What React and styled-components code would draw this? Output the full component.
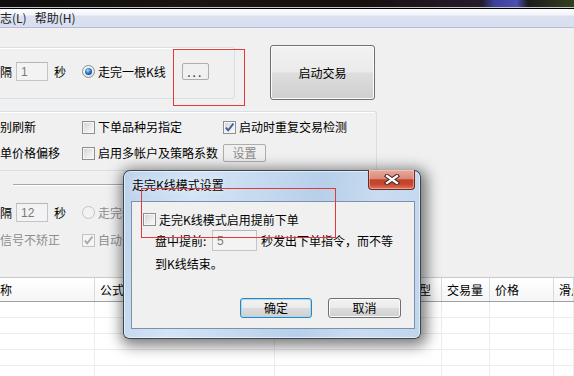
import styled, { createGlobalStyle } from "styled-components"

const GlobalStyle = createGlobalStyle`
	html, body {
		margin: 0;
		padding: 0;
	}
	body {
		background: #f0f0f0;
		font-family: "Noto Sans CJK SC", "Liberation Sans", sans-serif;
		font-size: 12px;
		color: #000;
	}
`

const Screen = styled.div`
	position: relative;
	width: 574px;
	height: 376px;
	overflow: hidden;
	background: #f0f0f0;
`
const Desktop = styled.div`
	height: 7px;
	border-bottom: 1px solid #c4c4c4;
	background: linear-gradient(
		to right,
		#0e0e0e 0,
		#1b1411 35%,
		#160f0d 62%,
		#241c2c 84%,
		#3c3f98 86%,
		#4b50b2 90%,
		#1c1c1c 92%,
		#33401f 100%
	);
`
const MenuBar = styled.div`
	display: flex;
	align-items: center;
	height: 18px;
	margin-left: -4px;
	border-top: 1px solid #000;
	border-bottom: 1px solid #b6bcd2;
	background: linear-gradient(#fcfdfe 0, #f1f4fa 6px, #dbe1f1 7px, #d9dff0 100%);
`
const MenuItem = styled.span`
	padding: 0 4px;
	line-height: 16px;
	color: #222;
`

const Body = styled.div`
	padding-top: 17px;
`
const TopRow = styled.div`
	display: flex;
	align-items: flex-start;
`
const GroupBox = styled.div`
	box-sizing: border-box;
	margin-left: -10px;
	margin-top: ${(p) => p.$top || 0}px;
	width: ${(p) => p.$w}px;
	height: ${(p) => p.$h}px;
	border: 1px solid #d5dfe5;
	border-radius: 3px;
	box-shadow: inset 1px 1px 0 #fff;
`
const OptionRow = styled.div`
	display: flex;
	align-items: center;
	height: ${(p) => p.$h || 18}px;
	margin-top: ${(p) => p.$top || 0}px;
	padding-left: ${(p) => p.$pad || 0}px;
	padding-bottom: ${(p) => p.$padBottom || 0}px;
	box-sizing: border-box;
`
const InlineRow = styled(OptionRow)`
	height: 100%;
`
const Text = styled.span`
	flex: none;
	line-height: 16px;
	white-space: nowrap;
	color: ${(p) => (p.$disabled ? "#8d8d8d" : "#000")};
	margin-left: ${(p) => p.$ml || 0}px;
	width: ${(p) => (p.$w ? `${p.$w}px` : "auto")};
`
const TextBox = styled.span`
	box-sizing: border-box;
	flex: none;
	display: flex;
	align-items: center;
	width: ${(p) => p.$w}px;
	height: ${(p) => p.$h || 19}px;
	margin-left: ${(p) => p.$ml || 0}px;
	padding-left: 4px;
	border: 1px solid #c2c4c8;
	border-top-color: #b4b6ba;
	background: #f3f3f3;
	color: #7a7a7a;
	font-family: "Liberation Sans", sans-serif;
	font-size: 12px;
`
const Radio = styled.span`
	box-sizing: border-box;
	flex: none;
	position: relative;
	width: 13px;
	height: 13px;
	margin-left: ${(p) => p.$ml || 0}px;
	border-radius: 50%;
	border: 1px solid ${(p) => (p.$disabled ? "#c3c3c3" : "#8e8f8f")};
	background: ${(p) =>
		p.$disabled ? "#f2f2f2" : "radial-gradient(circle at 35% 35%, #ffffff, #d9dbde)"};

	&::after {
		content: "";
		display: ${(p) => (p.$checked ? "block" : "none")};
		position: absolute;
		left: 2px;
		top: 2px;
		width: 7px;
		height: 7px;
		border-radius: 50%;
		background: radial-gradient(circle at 40% 35%, #b7e3ff 0, #3d8fd8 35%, #10478c 75%, #0c2f63 100%);
	}
`
const CheckBox = styled.span`
	box-sizing: border-box;
	flex: none;
	display: flex;
	align-items: center;
	justify-content: center;
	width: 13px;
	height: 13px;
	margin-left: ${(p) => p.$ml || 0}px;
	border: 1px solid ${(p) => (p.$disabled ? "#c3c3c3" : "#8e8f8f")};
	background: ${(p) =>
		p.$disabled ? "#f4f4f4" : "linear-gradient(135deg, #cfd2d6 0%, #eceded 60%, #fafafa 100%)"};
	box-shadow: inset 0 0 0 1px ${(p) => (p.$disabled ? "#f4f4f4" : "#f6f6f6")};
`
const FlatButton = styled.span`
	box-sizing: border-box;
	flex: none;
	display: flex;
	align-items: center;
	justify-content: center;
	width: ${(p) => p.$w}px;
	height: ${(p) => p.$h}px;
	margin-left: ${(p) => p.$ml || 0}px;
	border: 1px solid #adadad;
	border-radius: 2px;
	background: #f0f0f0;
	color: ${(p) => (p.$disabled ? "#8a8a8a" : "#333")};
	line-height: 14px;
	letter-spacing: ${(p) => p.$spacing || 0}px;
`
const AeroButton = styled.span`
	box-sizing: border-box;
	flex: none;
	display: flex;
	align-items: center;
	justify-content: center;
	width: ${(p) => p.$w}px;
	height: ${(p) => p.$h}px;
	margin-left: ${(p) => p.$ml || 0}px;
	border: 1px solid ${(p) => (p.$focused ? "#3c7fb1" : "#707070")};
	border-radius: 3px;
	background: linear-gradient(#f2f2f2 0%, #ebebeb 48%, #dddddd 52%, #cfcfcf 100%);
	box-shadow: inset 0 0 0 1px ${(p) => (p.$focused ? "#9fdcf7" : "#fbfbfb")};
	line-height: 16px;
`

const OptionsGrid = styled.div`
	display: grid;
	grid-template-columns: 82px 141px auto;
	grid-auto-rows: 18px;
	row-gap: 8px;
	align-items: center;
	padding: 6px 0 0 9px;
`
const Cell = styled.div`
	display: flex;
	align-items: center;
`
const Separator = styled.div`
	width: 330px;
	margin: 13px 0 0 13px;
	border-top: 1px solid #a7a7a7;
	border-bottom: 1px solid #ffffff;
`

const cols = "136px 180px 167px 48px 64px 1fr"

const Table = styled.div`
	margin-top: 28px;
	margin-left: -41px;
	border-top: 1px solid #c9c9c9;
	background: #fff;
`
const HeaderRow = styled.div`
	display: grid;
	grid-template-columns: ${cols};
	height: 23px;
	border-bottom: 1px solid #a0a0a0;
	background: linear-gradient(#ffffff, #f4f5f6);
`
const HeaderCell = styled.div`
	display: flex;
	align-items: center;
	justify-content: ${(p) => (p.$right ? "flex-end" : "flex-start")};
	padding: 0 10px 0 5px;
	border-right: 1px solid #dadada;
	white-space: nowrap;
	overflow: hidden;
	line-height: 16px;
`
const DataRow = styled.div`
	display: grid;
	grid-template-columns: ${cols};
	height: 15px;
	border-bottom: 1px solid #ececec;
`
const DataCell = styled.div`
	border-right: 1px solid #ececec;
`

const Dialog = styled.div`
	position: absolute;
	left: 123px;
	top: 170px;
	box-sizing: border-box;
	width: 298px;
	height: 169px;
	display: flex;
	flex-direction: column;
	padding: 0 5px 9px 7px;
	border: 1px solid rgba(20, 28, 40, 0.78);
	border-radius: 7px 7px 6px 6px;
	background: linear-gradient(
		100deg,
		#bcd3ec 0%,
		#d3e4f6 22%,
		#c4d9ef 45%,
		#b7cfea 62%,
		#cadcf1 80%,
		#c0d6ee 100%
	);
	box-shadow: inset 0 0 0 1px rgba(255, 255, 255, 0.55), 2px 3px 14px 4px rgba(0, 0, 0, 0.5);
`
const TitleBar = styled.div`
	display: flex;
	align-items: flex-start;
	height: 30px;
`
const Title = styled.span`
	padding: 6px 0 0 1px;
	line-height: 16px;
	color: #000;
	text-shadow: 0 0 6px rgba(255, 255, 255, 0.9);
`
const CloseButton = styled.span`
	box-sizing: border-box;
	display: flex;
	align-items: center;
	justify-content: center;
	width: 47px;
	height: 20px;
	margin: -1px 0 0 auto;
	border: 1px solid #6e2a22;
	border-top: none;
	border-radius: 0 0 4px 4px;
	background: linear-gradient(#e8aa9d 0%, #d98b79 45%, #c3432c 52%, #c8462e 75%, #e07660 100%);
	box-shadow: inset 0 0 0 1px rgba(255, 220, 210, 0.45);
`
const Client = styled.div`
	box-sizing: border-box;
	flex: 1;
	display: flex;
	flex-direction: column;
	border: 1px solid #7d91ad;
	background: #f0f0f0;
`
const ButtonBar = styled.div`
	display: flex;
	justify-content: flex-end;
	gap: 16px;
	margin-top: auto;
	padding: 0 13px 10px 0;
`
const Highlight = styled.div`
	position: absolute;
	left: ${(p) => p.$x}px;
	top: ${(p) => p.$y}px;
	width: ${(p) => p.$w}px;
	height: ${(p) => p.$h}px;
	box-sizing: border-box;
	border: 1px solid #e23a3a;
	pointer-events: none;
`

const Tick = ({ disabled }) => (
	<svg width='11' height='11' viewBox='0 0 11 11'>
		<path
			d='M1.8 5.6 L4.2 8.4 L9.4 1.6'
			fill='none'
			stroke={disabled ? "#a8a8a8" : "#44599a"}
			strokeWidth='1.8'
		/>
	</svg>
)

const CloseGlyph = () => (
	<svg width='16' height='11' viewBox='0 0 16 11'>
		<path d='M3 2 L13 9 M13 2 L3 9' stroke='#4a2a2a' strokeWidth='4.4' strokeLinecap='square' />
		<path d='M3 2 L13 9 M13 2 L3 9' stroke='#ffffff' strokeWidth='2.2' strokeLinecap='square' />
	</svg>
)

const rows = [0, 1, 2, 3, 4, 5]

const App = () => {
	return (
		<Screen>
			<GlobalStyle />
			<Desktop />
			<MenuBar>
				<MenuItem>志(L)</MenuItem>
				<MenuItem>帮助(H)</MenuItem>
			</MenuBar>

			<Body>
				<TopRow>
					<GroupBox $top={2} $w={245} $h={52}>
						<InlineRow $pad={9} $padBottom={3}>
							<Text>隔</Text>
							<TextBox $w={32} $ml={4}>1</TextBox>
							<Text $ml={6}>秒</Text>
							<Radio $ml={16} $checked />
							<Text $ml={3}>走完一根K线</Text>
							<FlatButton $w={27} $h={17} $ml={16} $spacing={2}>
								...
							</FlatButton>
						</InlineRow>
					</GroupBox>
					<AeroButton $w={105} $h={55} $ml={35}>
						启动交易
					</AeroButton>
				</TopRow>

				<GroupBox $top={11} $w={387} $h={60}>
					<OptionsGrid>
						<Text>别刷新</Text>
						<Cell>
							<CheckBox />
							<Text $ml={3}>下单品种另指定</Text>
						</Cell>
						<Cell>
							<CheckBox>
								<Tick />
							</CheckBox>
							<Text $ml={3}>启动时重复交易检测</Text>
						</Cell>
						<Text>单价格偏移</Text>
						<Cell>
							<CheckBox />
							<Text $ml={3}>启用多帐户及策略系数</Text>
						</Cell>
						<Cell>
							<FlatButton $w={43} $h={18} $disabled>
								设置
							</FlatButton>
						</Cell>
					</OptionsGrid>
				</GroupBox>

				<Separator />

				<OptionRow $h={19} $top={17}>
					<Text>隔</Text>
					<TextBox $w={32} $ml={4}>12</TextBox>
					<Text $ml={6}>秒</Text>
					<Radio $ml={16} $disabled />
					<Text $ml={3} $disabled>
						走完一根K线
					</Text>
				</OptionRow>
				<OptionRow $top={9}>
					<Text $w={82} $disabled>
						信号不矫正
					</Text>
					<CheckBox $disabled>
						<Tick disabled />
					</CheckBox>
					<Text $ml={3} $disabled>
						自动开平仓
					</Text>
				</OptionRow>

				<Table>
					<HeaderRow>
						<HeaderCell>合约名称</HeaderCell>
						<HeaderCell>公式</HeaderCell>
						<HeaderCell $right>交易类型</HeaderCell>
						<HeaderCell>交易量</HeaderCell>
						<HeaderCell>价格</HeaderCell>
						<HeaderCell>滑点</HeaderCell>
					</HeaderRow>
					{rows.map((r) => (
						<DataRow key={r}>
							<DataCell />
							<DataCell />
							<DataCell />
							<DataCell />
							<DataCell />
							<DataCell />
						</DataRow>
					))}
				</Table>
			</Body>

			<Highlight $x={173} $y={49} $w={72} $h={57} />

			<Dialog>
				<TitleBar>
					<Title>走完K线模式设置</Title>
					<CloseButton>
						<CloseGlyph />
					</CloseButton>
				</TitleBar>
				<Client>
					<OptionRow $h={13} $top={11} $pad={11}>
						<CheckBox />
						<Text $ml={3}>走完K线模式启用提前下单</Text>
					</OptionRow>
					<OptionRow $h={21} $top={4} $pad={23}>
						<Text $w={57}>盘中提前:</Text>
						<TextBox $w={45} $h={21}>
							5
						</TextBox>
						<Text $ml={4}>秒发出下单指令，而不等</Text>
					</OptionRow>
					<OptionRow $h={16} $top={5} $pad={23}>
						<Text>到K线结束。</Text>
					</OptionRow>
					<ButtonBar>
						<AeroButton $w={72} $h={20} $focused>
							确定
						</AeroButton>
						<AeroButton $w={73} $h={20}>
							取消
						</AeroButton>
					</ButtonBar>
				</Client>
			</Dialog>

			<Highlight $x={141} $y={188} $w={195} $h={50} />
		</Screen>
	)
}

export default App
